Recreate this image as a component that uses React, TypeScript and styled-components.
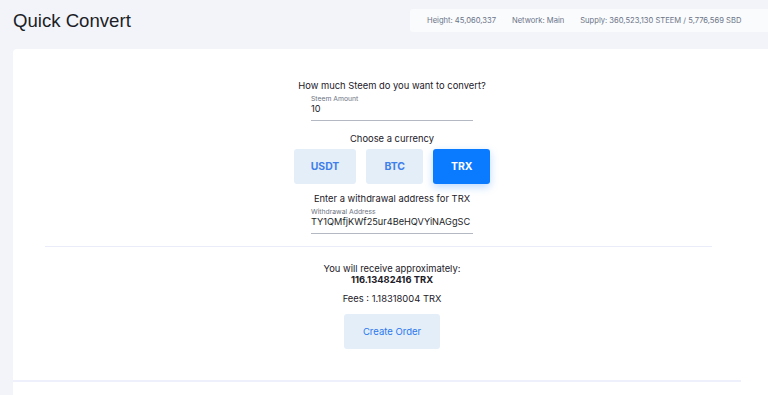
import React from 'react';
import styled, { createGlobalStyle } from 'styled-components';

const GlobalStyle = createGlobalStyle`
  html, body {
    margin: 0;
    padding: 0;
    background: #f3f4f9;
    overflow: hidden;
  }

  body {
    font-family: Inter, 'Liberation Sans', sans-serif;
    color: #1d2028;
  }
`;

type Currency = 'USDT' | 'BTC' | 'TRX';

const CURRENCIES: Currency[] = ['USDT', 'BTC', 'TRX'];

const App: React.FC = () => {
  const selected: Currency = 'TRX';

  return (
    <>
      <GlobalStyle />
      <Page>
        <Header>
          <Title>Quick Convert</Title>
          <Stats>
            <span>Height: 45,060,337</span>
            <span>Network: Main</span>
            <span>Supply: 360,523,130 STEEM / 5,776,569 SBD</span>
          </Stats>
        </Header>

        <Card>
          <Form>
            <Prompt>How much Steem do you want to convert?</Prompt>
            <Field>
              <FieldLabel>Steem Amount</FieldLabel>
              <FieldValue>10</FieldValue>
            </Field>

            <Prompt $top={12}>Choose a currency</Prompt>
            <CurrencyRow>
              {CURRENCIES.map((c) => (
                <CurrencyButton key={c} $active={c === selected}>
                  {c}
                </CurrencyButton>
              ))}
            </CurrencyRow>

            <Prompt $top={9}>Enter a withdrawal address for {selected}</Prompt>
            <Field>
              <FieldLabel>Withdrawal Address</FieldLabel>
              <FieldValue>TY1QMfjKWf25ur4BeHQVYiNAGgSC</FieldValue>
            </Field>
          </Form>

          <Divider />

          <Summary>
            <SummaryLine>You will receive approximately:</SummaryLine>
            <SummaryLine $bold>116.13482416 TRX</SummaryLine>
            <Fees>Fees : 1.18318004 TRX</Fees>
            <OrderButton>Create Order</OrderButton>
          </Summary>

          <FooterRule />
        </Card>
      </Page>
    </>
  );
};

const Page = styled.div`
  width: 768px;
  height: 395px;
  display: flex;
  flex-direction: column;
`;

const Header = styled.header`
  display: flex;
  align-items: center;
  justify-content: space-between;
  padding-top: 9px;
  height: 23px;
`;

const Title = styled.h1`
  margin: 0 0 0 13px;
  font-family: 'Liberation Sans', Arial, sans-serif;
  font-size: 18.6px;
  font-weight: 400;
  color: #1b1e27;
  line-height: 23px;
`;

const Stats = styled.div`
  display: flex;
  align-items: center;
  gap: 16px;
  height: 23px;
  padding: 0 29px 0 17px;
  width: 358px;
  box-sizing: border-box;
  background: #fafbfd;
  border-radius: 3px 0 0 3px;
  font-size: 7.6px;
  color: #6b7488;
  white-space: nowrap;
`;

const Card = styled.main`
  margin: 17px 0 0 13px;
  width: 758px;
  flex: 1;
  background: #fff;
  border-radius: 4px 4px 0 0;
  display: flex;
  flex-direction: column;
`;

const Form = styled.section`
  padding-top: 31px;
  display: flex;
  flex-direction: column;
  align-items: center;
`;

const Prompt = styled.p<{ $top?: number }>`
  margin: ${(p) => p.$top ?? 0}px 0 0;
  font-size: 9.4px;
  line-height: 12px;
  color: #1d2028;
`;

const Field = styled.div`
  width: 162px;
  margin-top: 3px;
  padding-bottom: 6px;
  border-bottom: 1px solid #b3b8c3;
  display: flex;
  flex-direction: column;
`;

const FieldLabel = styled.span`
  font-size: 6.8px;
  line-height: 8px;
  color: #6e7482;
`;

const FieldValue = styled.span`
  font-size: 9.2px;
  line-height: 11px;
  color: #1b1e27;
  white-space: nowrap;
`;

const CurrencyRow = styled.div`
  display: flex;
  gap: 10px;
  margin-top: 4px;
`;

const CurrencyButton = styled.button<{ $active?: boolean }>`
  height: 35px;
  padding: 0 17px;
  min-width: 57px;
  border: none;
  border-radius: 3px;
  font-family: Inter, 'Liberation Sans', sans-serif;
  font-size: 10.4px;
  font-weight: 700;
  background: ${(p) => (p.$active ? '#0a7bff' : '#e4eef9')};
  color: ${(p) => (p.$active ? '#ffffff' : '#3f7fe9')};
  box-shadow: ${(p) =>
    p.$active ? '0 3px 8px rgba(10, 123, 255, 0.28)' : 'none'};
`;

const Divider = styled.hr`
  margin: 12px 59px 0 32px;
  border: none;
  height: 1px;
  background: #eaecfa;
`;

const Summary = styled.section`
  margin-top: 16px;
  display: flex;
  flex-direction: column;
  align-items: center;
`;

const SummaryLine = styled.p<{ $bold?: boolean }>`
  margin: 0;
  font-size: 9.4px;
  line-height: 11px;
  font-weight: ${(p) => (p.$bold ? 700 : 400)};
  color: #1d2028;
`;

const Fees = styled(SummaryLine)`
  margin-top: 8px;
  line-height: 12px;
`;

const OrderButton = styled.button`
  margin-top: 9px;
  height: 35px;
  width: 96px;
  border: none;
  border-radius: 3px;
  background: #e4eef9;
  color: #2a78ee;
  font-family: Inter, 'Liberation Sans', sans-serif;
  font-size: 9.5px;
`;

const FooterRule = styled.div`
  margin: 31px 30px 0 0;
  height: 2px;
  background: #eef0fb;
`;

export default App;
